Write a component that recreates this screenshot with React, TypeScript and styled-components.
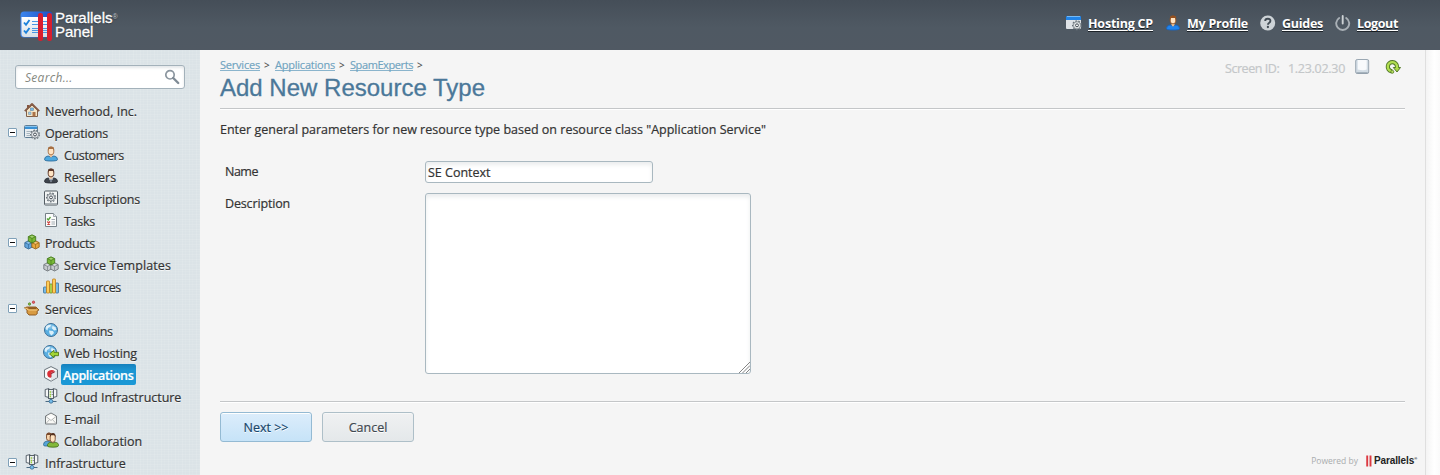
import React from 'react';
import type { ReactNode } from 'react';
import styled, { createGlobalStyle, css } from 'styled-components';

const GlobalStyle = createGlobalStyle`
  *, *::before, *::after { box-sizing: border-box; }
  html, body { margin: 0; padding: 0; overflow: hidden; }
  body {
    background: #f5f5f5;
    color: #333;
    font: 12.5px/22px "Open Sans", "Noto Sans", sans-serif;
  }
  svg { display: block; flex: none; }
`;

const Page = styled.div`
  display: flex;
  flex-direction: column;
  width: 1440px;
  height: 475px;
  overflow: hidden;
`;

/* ---------- header ---------- */

const Header = styled.header`
  display: flex;
  flex: none;
  justify-content: space-between;
  height: 50px;
  padding: 0 42px 0 20px;
  background: linear-gradient(#454e58, #4f5963 55%, #505963);
`;

const Brand = styled.div`
  display: flex;
  gap: 2px;
  padding-top: 10px;
`;

const BrandName = styled.div`
  padding-top: 1px;
  color: #fff;
  font: 15px/14px "Liberation Sans", Arial, sans-serif;
  text-shadow: 0 1px 1px #2b333b;
  -webkit-text-stroke: 0.3px #fff;
`;

const Registered = styled.span`
  display: inline-block;
  font-size: 7px;
  line-height: 8px;
  vertical-align: 4px;
  color: #c3c8cc;
  -webkit-text-stroke: 0;
`;

const UserNav = styled.nav`
  display: flex;
  gap: 12px;
  padding-top: 12px;
`;

const UserLink = styled.a`
  display: flex;
  gap: 6px;
  height: 22px;
  padding-top: 3px;
  color: #fff;
`;

const UserLabel = styled.span<{ $width: number; $tracking: number }>`
  width: ${(p) => p.$width}px;
  height: 16px;
  border-bottom: 1px solid #fff;
  box-shadow: 0 1px 0 #1c2228;
  font-weight: 700;
  line-height: 17px;
  letter-spacing: ${(p) => p.$tracking}px;
  text-shadow: 0 1px 0 #14191d;
  white-space: nowrap;
`;

/* ---------- sidebar ---------- */

const Body = styled.div`
  display: flex;
  flex: 1;
  min-height: 0;
`;

const Sidebar = styled.aside`
  width: 200px;
  flex: none;
  padding-top: 15px;
  background-color: #dbe3e7;
  background-image:
    repeating-linear-gradient(90deg, rgba(255, 255, 255, 0.1) 0 1px, transparent 1px 3px, rgba(255, 255, 255, 0.06) 3px 4px, transparent 4px 7px),
    repeating-linear-gradient(0deg, rgba(255, 255, 255, 0.1) 0 1px, transparent 1px 3px, rgba(255, 255, 255, 0.06) 3px 4px, transparent 4px 5px);
`;

const SearchBox = styled.div`
  display: flex;
  align-items: center;
  justify-content: space-between;
  width: 170px;
  height: 24px;
  margin: 0 0 11px 15px;
  padding: 0 4px 0 9px;
  border: 1px solid #a3b1ba;
  border-radius: 3px;
  background: #fff;
  box-shadow: inset 0 2px 3px #e4e7e9;
`;

const Placeholder = styled.span`
  padding-top: 2px;
  color: #85897f;
  font-size: 12px;
  font-style: italic;
  letter-spacing: 0.3px;
`;

const TreeRow = styled.div<{ $child?: boolean }>`
  display: flex;
  align-items: flex-start;
  height: 22px;
  padding-left: ${(p) => (p.$child ? 43 : 8)}px;

  > svg {
    margin-top: 2px;
  }
`;

const ToggleSlot = styled.span`
  width: 16px;
  flex: none;
  padding-top: 6px;
`;

const Toggle = styled.span`
  display: flex;
  align-items: center;
  justify-content: center;
  width: 9px;
  height: 9px;
  border: 1px solid #7fa0b8;
  border-radius: 1px;
  background: #fff;

  &::before {
    content: '';
    width: 5px;
    height: 1px;
    background: #111;
  }
`;

const TreeLabel = styled.span<{ $tracking: number; $active?: boolean }>`
  height: 22px;
  margin-left: 5px;
  line-height: 24px;
  letter-spacing: ${(p) => p.$tracking}px;
  white-space: nowrap;
  text-shadow: 0 1px 0 rgba(255, 255, 255, 0.7);
  -webkit-text-stroke: 0.2px currentColor;
  ${(p) =>
    p.$active &&
    css`
      width: 75px;
      height: 21px;
      margin-left: 2px;
      padding-left: 2px;
      border-radius: 2px;
      background: linear-gradient(#1580bd, #1b95d3 30%, #1a98d6);
      color: #fff;
      font-weight: 600;
      line-height: 23px;
      text-shadow: none;
    `}
`;

/* ---------- content ---------- */

const Content = styled.main`
  display: flex;
  flex: 1;
  flex-direction: column;
  padding: 0 20px 0 20px;
  border-right: 1px solid #dfdfdf;
  background: #f5f5f5;
`;

const Gutter = styled.div`
  width: 14px;
  flex: none;
  background: linear-gradient(90deg, #f4f4f4, #fff 60%, #fafafa);
`;

const TopRow = styled.div`
  display: flex;
  justify-content: space-between;
  height: 59px;
  border-bottom: 1px solid #c4c6c8;
  box-shadow: 0 1px 0 #fff;
`;

const Breadcrumbs = styled.div`
  display: flex;
  gap: 4px;
  height: 23px;
  padding-top: 8px;
  font-size: 11px;
  line-height: 14px;
`;

const Crumb = styled.a<{ $width: number; $tracking: number }>`
  width: ${(p) => p.$width}px;
  height: 13px;
  border-bottom: 1px solid #8ab4cc;
  color: #6fa3c0;
  letter-spacing: ${(p) => p.$tracking}px;
  white-space: nowrap;
  -webkit-text-stroke: 0.15px currentColor;
`;

const Separator = styled.span`
  width: 7px;
  color: #555;
  font-size: 10px;
  font-weight: 600;
`;

const Title = styled.h1`
  margin: 0;
  color: #4b7899;
  font: 400 24px/30px "Liberation Sans", Arial, sans-serif;
  -webkit-text-stroke: 0.3px #4b7899;
`;

const ScreenInfo = styled.div`
  display: flex;
  padding: 8px 4px 0 0;
  color: #c4c7c9;
  -webkit-text-stroke: 0.2px currentColor;
`;

const ScreenText = styled.span<{ $width: number; $tracking: number }>`
  width: ${(p) => p.$width}px;
  letter-spacing: ${(p) => p.$tracking}px;
  white-space: nowrap;
`;

const ScreenIcon = styled.span<{ $gap: number; $top: number }>`
  margin-left: ${(p) => p.$gap}px;
  padding-top: ${(p) => p.$top}px;
`;

const Intro = styled.p`
  margin: 10px 0 20px;
  height: 22px;
  -webkit-text-stroke: 0.2px currentColor;
`;

const Field = styled.div`
  display: flex;
  margin-bottom: 10px;
  padding-left: 5px;
`;

const FieldLabel = styled.label<{ $tracking: number }>`
  width: 200px;
  height: 20px;
  line-height: 22px;
  letter-spacing: ${(p) => p.$tracking}px;
  -webkit-text-stroke: 0.2px currentColor;
`;

const fieldBox = css`
  border: 1px solid #a9b8c0;
  border-radius: 3px;
  background: #fff;
  box-shadow: inset 0 3px 4px #ebedee;
  color: #333;
  font: 12.5px/20px "Open Sans", "Noto Sans", sans-serif;
  outline: none;
  -webkit-text-stroke: 0.2px currentColor;
`;

const TextInput = styled.input`
  ${fieldBox}
  width: 228px;
  height: 22px;
  padding: 0 2px;
`;

const TextArea = styled.textarea`
  ${fieldBox}
  display: block;
  width: 326px;
  height: 181px;
  padding: 2px;
  resize: none;
`;

const AreaWrap = styled.div`
  position: relative;
`;

const Grip = styled.svg`
  position: absolute;
  right: 1px;
  bottom: 1px;
`;

const Actions = styled.div`
  display: flex;
  gap: 10px;
  margin-top: 17px;
  padding-top: 10px;
  border-top: 1px solid #c4c6c8;
  box-shadow: inset 0 1px 0 #fff;
`;

const Button = styled.button<{ $primary?: boolean }>`
  width: 92px;
  height: 30px;
  padding: 1px 0 0;
  border: 1px solid ${(p) => (p.$primary ? '#94bad3' : '#aebfc8')};
  border-radius: 3px;
  background: ${(p) =>
    p.$primary ? 'linear-gradient(#dcedfb, #c6e3f8)' : 'linear-gradient(#f0f1f2, #e4e8ea)'};
  box-shadow: inset 0 1px 0 ${(p) => (p.$primary ? '#fff' : '#f7f8f8')};
  color: ${(p) => (p.$primary ? '#17466b' : '#3f4850')};
  font: 12.5px/22px "Open Sans", "Noto Sans", sans-serif;
  text-shadow: 0 1px 0 #fff;
  -webkit-text-stroke: 0.2px currentColor;
`;

const Footer = styled.footer`
  display: flex;
  align-items: center;
  justify-content: flex-end;
  gap: 8px;
  height: 20px;
  margin: 9px -12px 0 0;
  color: #a9acae;
  font-size: 8.5px;
`;

const FooterBrand = styled.span`
  display: flex;
  align-items: center;
  gap: 2px;
  color: #222;
  font: bold 10px/14px "Liberation Sans", Arial, sans-serif;
  letter-spacing: -0.1px;
`;

const TradeMark = styled.span`
  font-size: 4px;
  line-height: 4px;
  align-self: flex-start;
  margin: 3px 0 0 -2px;
`;

/* ---------- icons ---------- */

const Svg = ({ children, size = 16 }: { children: ReactNode; size?: number }) => (
  <svg width={size} height={size} viewBox="0 0 16 16" aria-hidden="true">
    {children}
  </svg>
);

const LogoIcon = () => (
  <svg width="33" height="32" viewBox="0 0 33 32" aria-hidden="true">
    <defs>
      <linearGradient id="sheet" x2="0" y2="1">
        <stop offset="0" stopColor="#fff" />
        <stop offset="1" stopColor="#d7dfe7" />
      </linearGradient>
      <linearGradient id="frame" x2="1" y2="0">
        <stop offset="0" stopColor="#3c86ee" />
        <stop offset="1" stopColor="#1c4fc4" />
      </linearGradient>
    </defs>
    <rect x=".5" y="1.5" width="32" height="26" rx="3.5" fill="url(#frame)" />
    <path d="M1.5 7H31.5V24Q31.5 27 28.5 27H4.5Q1.5 27 1.5 24Z" fill="url(#sheet)" />
    <path d="M4 12.5l2 2.3L9.5 10M4 20.5l2 2.3L9.5 18" fill="none" stroke="#1d82dc" strokeWidth="1.9" />
    <path d="M12 11.5h16M12 14.5h16M12 18.5h16M12 20.5h16M12 22.5h16" stroke="#4a97e4" strokeWidth="1" />
    <rect x="18" y="3" width="5" height="28" rx="2.3" fill="#d91e2e" />
    <rect x="27" y="3" width="5" height="28" rx="2.3" fill="#d91e2e" />
  </svg>
);

const SearchIcon = () => (
  <Svg>
    <circle cx="6" cy="5.8" r="4.2" fill="#fff" stroke="#8b969f" strokeWidth="1.7" />
    <path d="M9.2 9l5 5" stroke="#7f8b95" strokeWidth="2.4" strokeLinecap="round" />
  </Svg>
);

const Gear = ({ cx, cy, r }: { cx: number; cy: number; r: number }) => (
  <g>
    <circle cx={cx} cy={cy} r={r + 0.7} fill="none" stroke="#6b747b" strokeWidth="1.4" strokeDasharray="1.7 1.3" />
    <circle cx={cx} cy={cy} r={r} fill="#e4e7e9" stroke="#747c83" strokeWidth=".8" />
    <circle cx={cx} cy={cy} r={r * 0.4} fill="#fff" stroke="#444d55" strokeWidth="1" />
  </g>
);

const WindowGearIcon = () => (
  <Svg>
    <rect x=".5" y="1.5" width="13" height="12" rx="1" fill="#e9eef1" stroke="#5f7d95" />
    <path d="M1 2h12v3H1z" fill="#3991d5" />
    <path d="M1 2h12v1H1z" fill="#86c3ee" />
    <path d="M2.5 7.5H7M2.5 9.5H6M2.5 11.5H6" stroke="#a8b6c0" />
    <Gear cx={11} cy={10.5} r={3.6} />
  </Svg>
);

const HostingIcon = () => (
  <Svg>
    <path d="M0 5h15v9H1Q0 14 0 13z" fill="#dfe3e7" />
    <path d="M1 1h13q1 0 1 1v3H0V2q0-1 1-1z" fill="#2284e7" />
    <path d="M1 1h13v1H1z" fill="#74baf7" />
    <Gear cx={11} cy={10.3} r={3.6} />
  </Svg>
);

const HomeIcon = () => (
  <Svg>
    <path d="M2.5 8v6.5h11V8L8 3z" fill="#f4e6c8" stroke="#80604a" />
    <path d="M3 3h2v3H3z" fill="#85553f" />
    <path d="M.8 9.200L8 2l7.200 7.200" fill="none" stroke="#855b45" strokeWidth="1.8" strokeLinejoin="round" />
    <path d="M8.500 10h3v4.500h-3z" fill="#ab7348" />
    <rect x="6.500" y="6" width="3" height="2.500" fill="#75b9e6" stroke="#6285a2" strokeWidth=".6" />
    <path d="M4.500 10h2.500v2.500H4.500z" fill="#9bcbe9" stroke="#75889a" strokeWidth=".5" />
  </Svg>
);

type PersonProps = { hair: string; suit: string; trim?: string; tie?: boolean };

const PersonIcon = ({ hair, suit, trim = '#2d6c9c', tie }: PersonProps) => (
  <Svg>
    <path d="M1.5 13.5Q1.5 10.5 5 10l3 1 3-1q3.5.5 3.5 3.5Q14.500 15 8 15T1.5 13.5z" fill={suit} stroke={trim} strokeWidth=".9" />
    <path d="M6.5 7.5h3V10L8 11.700 6.500 10z" fill="#f0c49a" />
    <rect x="5.200" y="1" width="5.600" height="7.800" rx="2.700" fill="#ffe4c3" stroke={hair} strokeWidth=".9" />
    <path d="M5 5V2.800Q5 .5 8 .5t3 2.300V5l-1-2H6z" fill={hair} />
    {tie && <path d="M5.800 10L8 14.500 10.200 10 8 11z" fill="#fff" />}
    {tie && <path d="M8 11l-.8 1L8 14.500l.8-2.500z" fill="#2b3d55" />}
  </Svg>
);

const SubscriptionIcon = () => (
  <Svg>
    <rect x="1.500" y="1" width="13" height="14" rx="1" fill="#f3f5f5" stroke="#555e65" />
    <Gear cx={8} cy={7.4} r={3.6} />
    <path d="M2 13.500h12" stroke="#aab2b7" />
  </Svg>
);

const TasksIcon = () => (
  <Svg>
    <path d="M2.500 1.500h8l3 3v10h-11z" fill="#fbfcfc" stroke="#758087" />
    <path d="M10.500 1.500v3h3" fill="#dde3e6" stroke="#8b969d" strokeWidth=".8" />
    <path d="M4 6.500l1.300 1.500L7.500 5" fill="none" stroke="#54a234" strokeWidth="1.300" />
    <path d="M4.300 9.500l2.700 3M7 9.500l-2.700 3" stroke="#cc4440" strokeWidth="1.200" />
    <path d="M8.500 7.500H12M8.500 10H12M8.500 12H12" stroke="#a3abb0" />
  </Svg>
);

const Cube = ({ x, y, fill, edge }: { x: number; y: number; fill: string; edge: string }) => (
  <g transform={`translate(${x} ${y})`}>
    <path d="M3.500 0L7.200 1.800v4.500L3.500 8.200-.2 6.300V1.800z" fill={fill} stroke={edge} strokeWidth=".8" strokeLinejoin="round" />
    <path d="M0 2l3.500 1.600L7 2M3.500 3.600v4.200" fill="none" stroke={edge} strokeWidth=".6" />
    <path d="M1.500 1.900l2-1 2 1-2 1z" fill="#fff" opacity=".35" />
  </g>
);

const CubesIcon = ({ left, right, leftEdge, rightEdge }: { left: string; right: string; leftEdge: string; rightEdge: string }) => (
  <Svg>
    <Cube x={1} y={6.8} fill={left} edge={leftEdge} />
    <Cube x={8} y={6.8} fill={right} edge={rightEdge} />
    <Cube x={4.5} y={0.8} fill="#78b936" edge="#3f7219" />
  </Svg>
);

const BarsIcon = () => (
  <Svg>
    <rect x=".5" y="9" width="3" height="6" rx=".6" fill="#7ab9e2" stroke="#39749f" strokeWidth=".8" />
    <rect x="12.500" y="5" width="3" height="10" rx=".6" fill="#7ab9e2" stroke="#39749f" strokeWidth=".8" />
    <rect x="6.500" y="6" width="3" height="9" rx=".6" fill="#a8cf4b" stroke="#66902a" strokeWidth=".8" />
    <rect x="3.500" y="3" width="3" height="12" rx=".6" fill="#ffcd59" stroke="#bb7c1c" strokeWidth=".8" />
    <rect x="9.500" y="1" width="3" height="14" rx=".6" fill="#ffcd59" stroke="#bb7c1c" strokeWidth=".8" />
  </Svg>
);

const ServicesIcon = () => (
  <Svg>
    <circle cx="5.500" cy="4" r="1.200" fill="#82bf3b" stroke="#4d7a24" strokeWidth=".7" />
    <circle cx="9.500" cy="2.200" r="1.200" fill="#e8646a" stroke="#b2343c" strokeWidth=".7" />
    <path d="M3 7h9l3 3-1.800.8v3L11.500 15H5l-2-2.200V10L.5 7.800z" fill="#d89b42" stroke="#88531b" strokeWidth=".9" strokeLinejoin="round" />
    <path d="M3.500 7.300h8.200L13 9.300H5z" fill="#8f5a22" />
    <path d="M.9 7.800L4.800 10h8.500" fill="none" stroke="#f5cf86" />
  </Svg>
);

const GlobeIcon = ({ arrow }: { arrow?: boolean }) => (
  <Svg>
    <circle cx={arrow ? 7 : 8} cy="8" r="6.500" fill="#59aee1" stroke="#3c6e96" />
    <g transform={arrow ? 'translate(-1 .5)' : 'translate(0 .5)'}>
      <path d="M3 4Q5 2 8 2.300L7.500 4 5 5.500 4.500 8l-2-1.500zM9.500 3.500l3 1 1 3-2.500.5-2-2zM6 8l4 .5 1 2L8.500 13 6.500 11z" fill="#d9effa" />
      <ellipse cx="7" cy="4" rx="4" ry="2.200" fill="#fff" opacity=".25" />
    </g>
    {arrow && (
      <path d="M6.500 10L11 6.300v2h4.500v3.400H11v2z" fill="#a2d536" stroke="#537c18" strokeWidth=".9" strokeLinejoin="round" />
    )}
  </Svg>
);

const AppsIcon = () => (
  <Svg>
    <path d="M8 .6l6.500 3.200v7.700L8 15.200l-6.500-3.700V3.800z" fill="#f9fafa" stroke="#69737a" strokeLinejoin="round" />
    <path d="M8 7.500v7.200l6-3.400V4.200z" fill="#d4dade" />
    <path d="M7.200 4.200Q10 3.500 11.700 5L8 7v4.800Q4.200 11.600 4.200 7.800 4.200 5 7.200 4.200z" fill="#d92f37" />
    <path d="M8 7l3.700-2Q12.500 8.500 8 11.500z" fill="#a32432" />
    <path d="M8.500 8l5-2.500v5.500l-5 3z" fill="#e3e7ea" />
  </Svg>
);

const ServersIcon = () => (
  <Svg>
    <path d="M2.200 1.500L6 .6V9.500L2.200 8.500zM13.800 1.500L10 .6v8.900l3.800-1z" fill="#f4f6f7" stroke="#4b555d" strokeWidth=".9" />
    <rect x="5.500" y="1.500" width="5" height="9" fill="#e8ecec" stroke="#4b555d" strokeWidth=".9" />
    <path d="M6.700 4h1.200M6.700 6.500h1.200M6.700 8.500h1.200" stroke="#8fcb24" strokeWidth="1.400" />
    <path d="M8.700 4h1M8.700 6.500h1" stroke="#5d666e" />
    <path d="M8 10.500v2M2.500 13.500h11" stroke="#4c6b83" />
    <circle cx="8" cy="13.300" r="1.900" fill="#75bce9" stroke="#3b6b90" strokeWidth=".8" />
  </Svg>
);

const MailIcon = () => (
  <Svg>
    <path d="M2.500 6L8 3l5.500 3v8h-11z" fill="#f8f8f5" stroke="#757b7e" strokeLinejoin="round" />
    <path d="M3 6.500l5 4 5-4M3 13.500L6.500 9.500M13 13.500L9.500 9.500" fill="none" stroke="#a9adad" strokeWidth=".8" />
    <path d="M4.500 6.300h7L8 9.200z" fill="#fff" />
  </Svg>
);

const PeopleIcon = () => (
  <Svg>
    <path d="M.5 12.500Q.5 9.500 4 9l4 1v4H2q-1.500 0-1.500-1.500z" fill="#56a5d9" stroke="#2e698f" strokeWidth=".8" />
    <rect x="3.500" y="1" width="5" height="7.500" rx="2.300" fill="#f8d5ac" stroke="#794829" strokeWidth=".9" />
    <path d="M3.500 4Q3 1 6 .7 8.500.8 8.500 3l-4 0z" fill="#7a4a2b" />
    <path d="M4.500 14Q4 10.800 8 10.200l2 .8 2-.8q4 .600 3.500 3.500 0 1.500-5.500 1.500T4.500 14z" fill="#83b83b" stroke="#416d1d" strokeWidth=".8" />
    <rect x="7.200" y="1.800" width="5" height="8.500" rx="2.500" fill="#ffe3c0" stroke="#7a4c30" strokeWidth=".9" />
    <path d="M7 5.300V3Q7.700 1 10 1t2.500 3v1.500l-1-2.300H8.200z" fill="#54311f" />
  </Svg>
);

const HelpIcon = () => (
  <Svg>
    <circle cx="7.700" cy="8" r="7.500" fill="#cdd3d7" />
    <path d="M5.200 6Q5.200 3.700 7.800 3.700t2.600 2.100Q10.400 7.200 9 8q-1 .6-1 1.700" fill="none" stroke="#414b54" strokeWidth="1.900" />
    <circle cx="7.900" cy="12" r="1.150" fill="#414b54" />
  </Svg>
);

const PowerIcon = () => (
  <Svg>
    <path d="M4.200 3A6.500 6.500 0 1 0 11.200 3" fill="none" stroke="#a9b0b6" strokeWidth="1.900" strokeLinecap="round" />
    <path d="M7.700 1v7.500" stroke="#cdd2d5" strokeWidth="1.900" strokeLinecap="round" />
  </Svg>
);

const NoteIcon = () => (
  <Svg>
    <rect x=".7" y="1.500" width="13" height="14" rx="1.500" fill="#d3dde5" stroke="#9aa7b2" />
    <path d="M2.700 2h9v9.500q-3 1.500-9 0z" fill="#f8fafc" />
    <path d="M1.700 14.900h11" stroke="#8997a3" />
  </Svg>
);

const RefreshIcon = () => (
  <Svg>
    <path d="M7.300 12.200H6.200A4.600 4.600 0 1 1 12 7.500V9" fill="none" stroke="#53782a" strokeWidth="4.200" />
    <path d="M8.300 8.500H15.500L12 13z" fill="#a9d744" stroke="#53782a" strokeWidth="1" strokeLinejoin="round" />
    <path d="M7 12.200H6.200A4.600 4.600 0 1 1 12 7.500v2" fill="none" stroke="#b2df50" strokeWidth="2.400" />
    <circle cx="7.300" cy="12.800" r="1.500" fill="#b9e25c" stroke="#53782a" strokeWidth=".8" />
  </Svg>
);

/* ---------- data ---------- */

type Item = { label: string; tracking: number; icon: ReactNode; level: 'home' | 'group' | 'child'; active?: boolean };

const tree: Item[] = [
  { label: 'Neverhood, Inc.', tracking: 0, icon: <HomeIcon />, level: 'home' },
  { label: 'Operations', tracking: -0.22, icon: <WindowGearIcon />, level: 'group' },
  { label: 'Customers', tracking: -0.35, icon: <PersonIcon hair="#a66f43" suit="#4ea9df" />, level: 'child' },
  { label: 'Resellers', tracking: 0, icon: <PersonIcon hair="#5d3728" suit="#3d434b" trim="#282d34" tie />, level: 'child' },
  { label: 'Subscriptions', tracking: -0.21, icon: <SubscriptionIcon />, level: 'child' },
  { label: 'Tasks', tracking: -0.26, icon: <TasksIcon />, level: 'child' },
  { label: 'Products', tracking: -0.23, icon: <CubesIcon left="#62a5dc" leftEdge="#2f628f" right="#e6a73d" rightEdge="#8e5c18" />, level: 'group' },
  { label: 'Service Templates', tracking: 0.1, icon: <CubesIcon left="#c6cacd" leftEdge="#676d72" right="#c6cacd" rightEdge="#676d72" />, level: 'child' },
  { label: 'Resources', tracking: -0.33, icon: <BarsIcon />, level: 'child' },
  { label: 'Services', tracking: -0.05, icon: <ServicesIcon />, level: 'group' },
  { label: 'Domains', tracking: -0.5, icon: <GlobeIcon />, level: 'child' },
  { label: 'Web Hosting', tracking: -0.11, icon: <GlobeIcon arrow />, level: 'child' },
  { label: 'Applications', tracking: -0.33, icon: <AppsIcon />, level: 'child', active: true },
  { label: 'Cloud Infrastructure', tracking: -0.03, icon: <ServersIcon />, level: 'child' },
  { label: 'E-mail', tracking: 0, icon: <MailIcon />, level: 'child' },
  { label: 'Collaboration', tracking: -0.05, icon: <PeopleIcon />, level: 'child' },
  { label: 'Infrastructure', tracking: 0, icon: <ServersIcon />, level: 'group' },
];

const userLinks = [
  { label: 'Hosting CP', width: 65, tracking: -0.21, icon: <HostingIcon /> },
  { label: 'My Profile', width: 61, tracking: -0.23, icon: <PersonIcon hair="#94501f" suit="#2184ed" trim="#1763c0" /> },
  { label: 'Guides', width: 41, tracking: -0.27, icon: <HelpIcon /> },
  { label: 'Logout', width: 41, tracking: -0.38, icon: <PowerIcon /> },
];

const crumbs = [
  { label: 'Services', width: 40, tracking: -0.21 },
  { label: 'Applications', width: 60, tracking: -0.22 },
  { label: 'SpamExperts', width: 63, tracking: -0.41 },
];

export default function App() {
  return (
    <Page>
      <GlobalStyle />
      <Header>
        <Brand>
          <LogoIcon />
          <BrandName>
            Parallels<Registered>®</Registered>
            <br />
            Panel
          </BrandName>
        </Brand>
        <UserNav>
          {userLinks.map((link) => (
            <UserLink key={link.label}>
              {link.icon}
              <UserLabel $width={link.width} $tracking={link.tracking}>
                {link.label}
              </UserLabel>
            </UserLink>
          ))}
        </UserNav>
      </Header>
      <Body>
        <Sidebar>
          <SearchBox>
            <Placeholder>Search...</Placeholder>
            <SearchIcon />
          </SearchBox>
          {tree.map((item) => (
            <TreeRow key={item.label} $child={item.level === 'child'}>
              {item.level !== 'child' && <ToggleSlot>{item.level === 'group' && <Toggle />}</ToggleSlot>}
              {item.icon}
              <TreeLabel $tracking={item.tracking} $active={item.active}>
                {item.label}
              </TreeLabel>
            </TreeRow>
          ))}
        </Sidebar>
        <Content>
          <TopRow>
            <div>
              <Breadcrumbs>
                {crumbs.map((crumb) => (
                  <React.Fragment key={crumb.label}>
                    <Crumb $width={crumb.width} $tracking={crumb.tracking}>
                      {crumb.label}
                    </Crumb>
                    <Separator>&gt;</Separator>
                  </React.Fragment>
                ))}
              </Breadcrumbs>
              <Title>Add New Resource Type</Title>
            </div>
            <ScreenInfo>
              <ScreenText $width={63} $tracking={-0.45}>Screen ID:</ScreenText>
              <ScreenText $width={57} $tracking={-0.28}>1.23.02.30</ScreenText>
              <ScreenIcon $gap={10} $top={0}>
                <NoteIcon />
              </ScreenIcon>
              <ScreenIcon $gap={14} $top={1}>
                <RefreshIcon />
              </ScreenIcon>
            </ScreenInfo>
          </TopRow>
          <Intro>Enter general parameters for new resource type based on resource class "Application Service"</Intro>
          <Field>
            <FieldLabel $tracking={-0.5}>Name</FieldLabel>
            <TextInput defaultValue="SE Context" />
          </Field>
          <Field>
            <FieldLabel $tracking={-0.15}>Description</FieldLabel>
            <AreaWrap>
              <TextArea />
              <Grip width="12" height="12" viewBox="0 0 12 12">
                <path d="M1 12L12 1M4.5 12L12 4.5M8 12l4-4" stroke="#777" fill="none" strokeWidth=".9" />
              </Grip>
            </AreaWrap>
          </Field>
          <Actions>
            <Button $primary>Next &gt;&gt;</Button>
            <Button>Cancel</Button>
          </Actions>
          <Footer>
            Powered by
            <FooterBrand>
              <svg width="6" height="12" viewBox="0 0 6 12" aria-hidden="true">
                <path d="M1.2 .5v11M4.5 .5v11" stroke="#dc3a42" strokeWidth="1.9" />
              </svg>
              Parallels
              <TradeMark>®</TradeMark>
            </FooterBrand>
          </Footer>
        </Content>
        <Gutter />
      </Body>
    </Page>
  );
}
